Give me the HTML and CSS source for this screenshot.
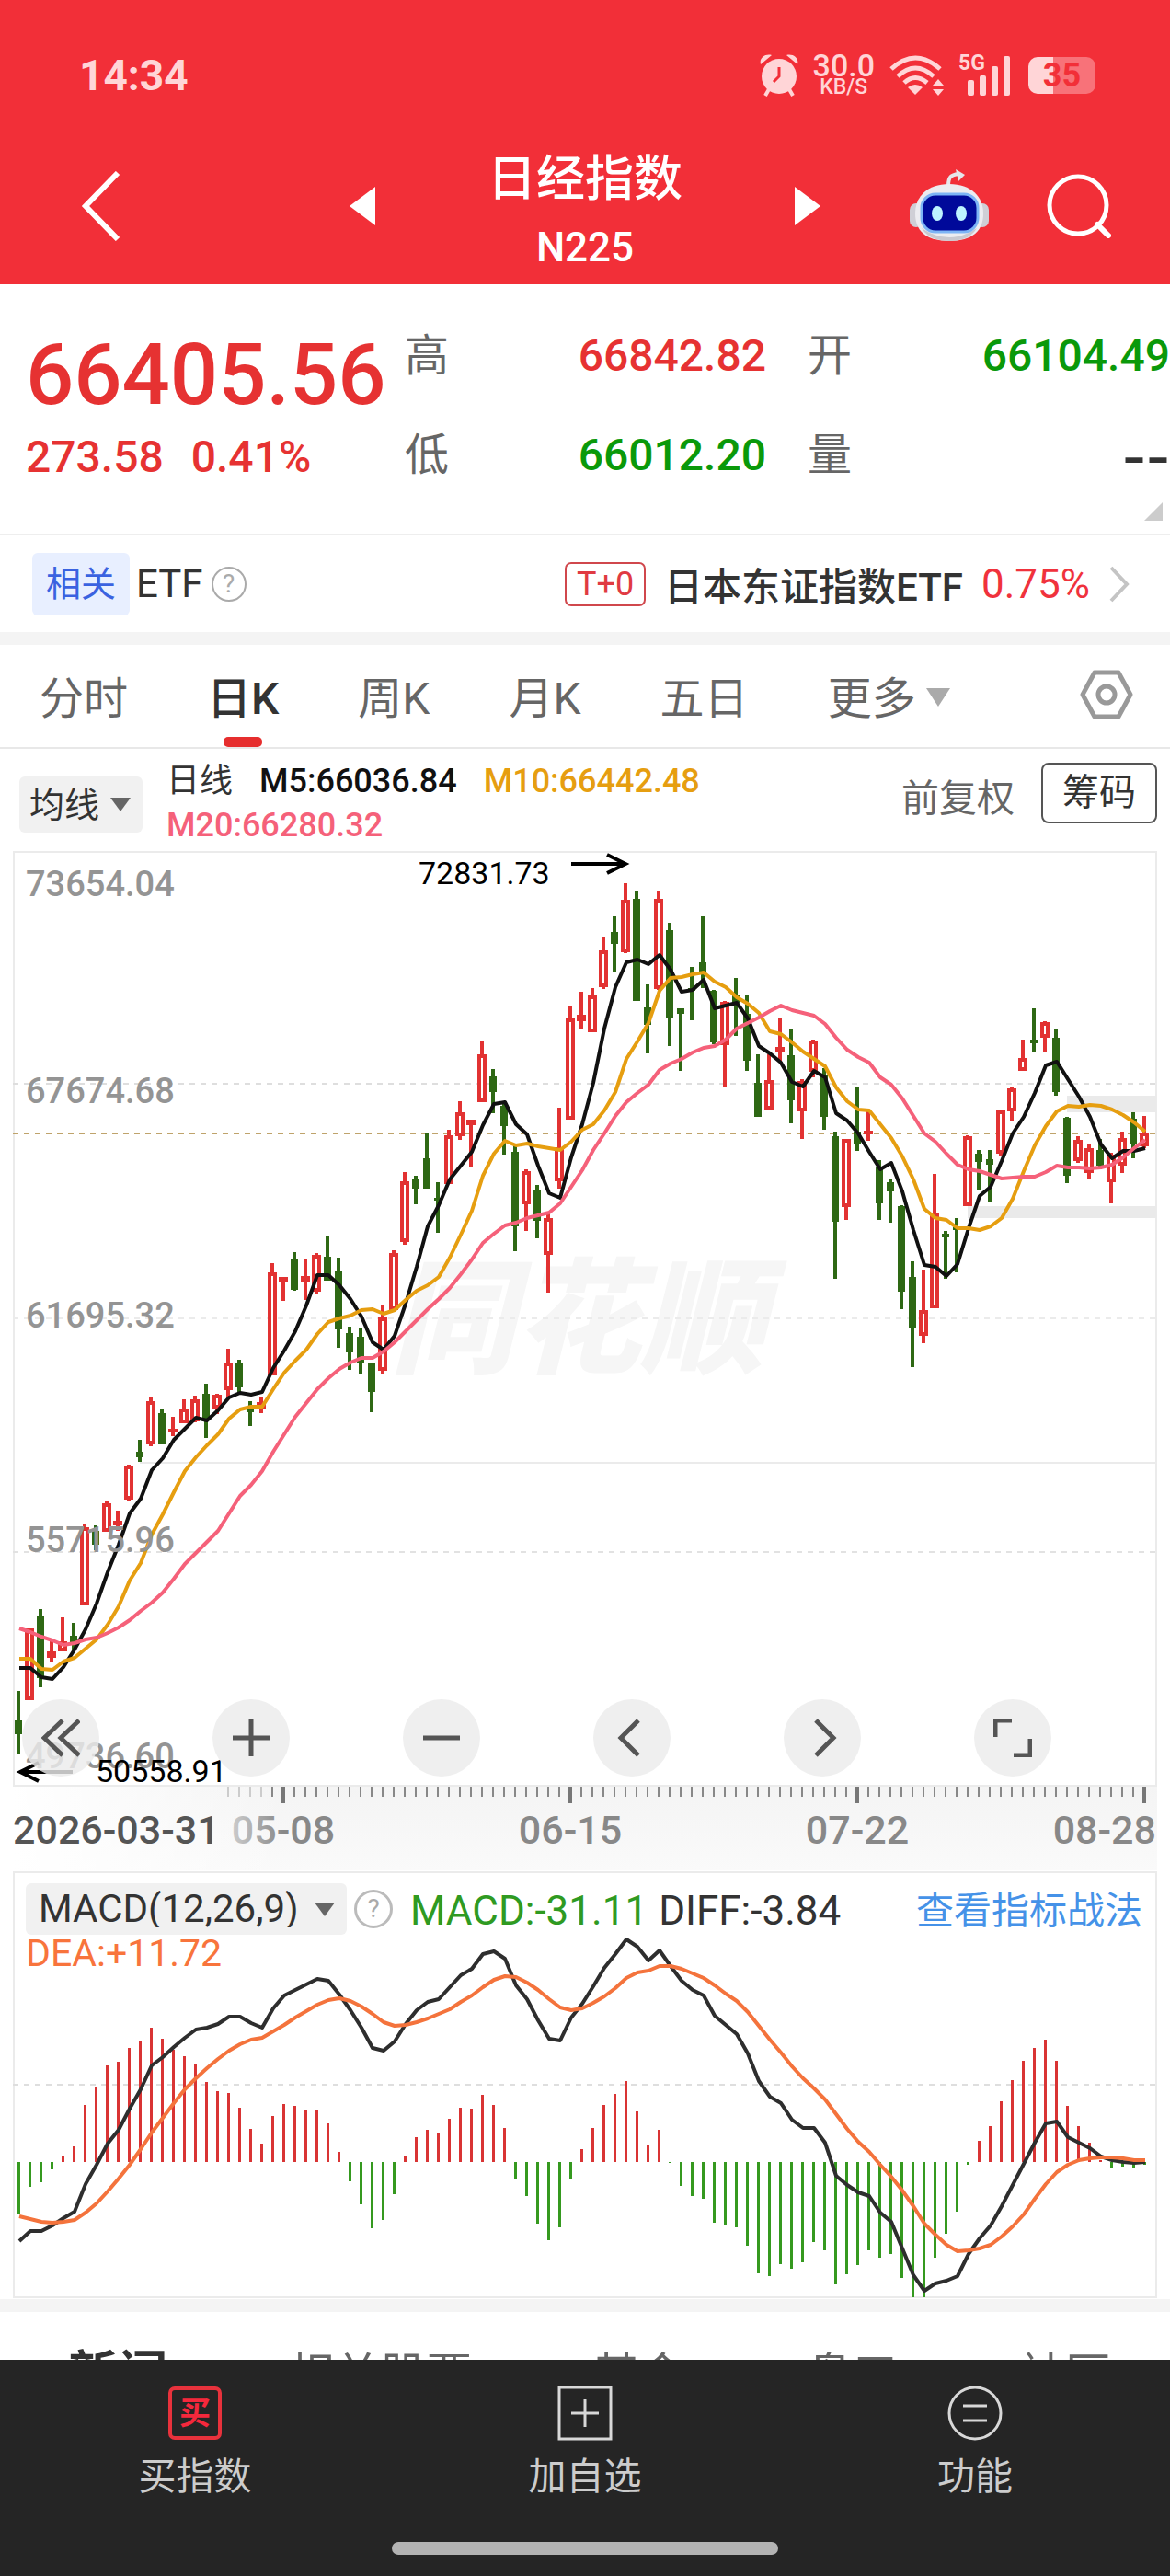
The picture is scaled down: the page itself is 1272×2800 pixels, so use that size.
FILE: index.html
```html
<!DOCTYPE html>
<html lang="zh-CN">
<head>
  <meta charset="UTF-8">
  <meta name="viewport" content="width=device-width, initial-scale=1.0">
  <title>日经指数 N225</title>
  <link rel="stylesheet" href="styles.css">
</head>
<body>

<header class="header">
  <div class="status-bar">
    <span class="clock">14:34</span>
    <div class="status-icons">
      <svg width="42" height="46" viewBox="0 0 42 46" fill="#ffd5d7">
        <path d="M1 11C-1 4 6-1 13 1ZM41 11C43 4 36-1 29 1Z"/>
        <path d="M10 38L6 45M32 38L36 45" stroke="#ffd5d7" stroke-width="4"/>
        <circle cx="21" cy="24" r="19"/>
        <path d="M21 14V24L15 30" fill="none" stroke="#f22f38" stroke-width="3"/>
      </svg>
      <div class="speed"><span>30.0</span><small>KB/S</small></div>
      <svg width="59" height="46" viewBox="0 0 59 46" fill="#ffd5d7">
        <g fill="none" stroke="#ffd5d7" stroke-width="5">
          <path d="M2 16Q28-8 55 16"/>
          <path d="M9 24Q28 6 48 24"/>
          <path d="M16 31Q28 20 41 31"/>
        </g>
        <path d="M28 44L20 36Q28 30 36 36ZM53 27L59 34H47ZM53 45L59 38H47Z"/>
      </svg>
      <div class="signal">
        <span>5G</span>
        <svg width="46" height="44" viewBox="0 0 46 44" fill="#ffd5d7">
          <rect x="0" y="27" width="7" height="17" rx="2"/>
          <rect x="13" y="22" width="7" height="22" rx="2"/>
          <rect x="26" y="12" width="7" height="32" rx="2"/>
          <rect x="39" y="1" width="7" height="43" rx="2"/>
        </svg>
      </div>
      <div class="battery"><span>35</span></div>
    </div>
  </div>

  <div class="title-bar">
    <button class="icon-btn back" aria-label="返回">
      <svg width="44" height="76" viewBox="0 0 44 76"><path d="M40 2L5 38L40 74" fill="none" stroke="#fff" stroke-width="6"/></svg>
    </button>
    <div class="title-switch">
      <button class="icon-btn" aria-label="上一个"><svg width="28" height="42" viewBox="0 0 28 42"><path d="M28 0V42L0 21Z" fill="#fff"/></svg></button>
      <h1 class="title"><span>日经指数</span><small>N225</small></h1>
      <button class="icon-btn" aria-label="下一个"><svg width="28" height="42" viewBox="0 0 28 42"><path d="M0 0V42L28 21Z" fill="#fff"/></svg></button>
    </div>
    <div class="title-actions">
      <button class="icon-btn" aria-label="助手">
        <svg width="88" height="80" viewBox="0 0 88 80">
          <path d="M43 18C43 8 46 6 54 5" fill="none" stroke="#e6e6ea" stroke-width="4"/>
          <path d="M51 0L61 6L54 13Z" fill="#e6e6ea"/>
          <rect x="1" y="37" width="14" height="26" rx="7" fill="#cfcfd6"/>
          <rect x="73" y="37" width="14" height="26" rx="7" fill="#cfcfd6"/>
          <path d="M44 16C68 16 81 30 81 48C81 68 68 78 44 78C20 78 7 68 7 48C7 30 20 16 44 16Z" fill="#ececf0"/>
          <path d="M14 64Q44 84 74 64Q66 78 44 78Q22 78 14 64Z" fill="#c9c9d0"/>
          <rect x="14" y="27" width="61" height="41" rx="15" fill="#00099a" stroke="#7db4f5" stroke-width="3"/>
          <ellipse cx="31" cy="48" rx="6" ry="8" fill="#bdf3ff"/>
          <ellipse cx="57" cy="48" rx="6" ry="8" fill="#bdf3ff"/>
        </svg>
      </button>
      <button class="icon-btn" aria-label="搜索">
        <svg width="70" height="70" viewBox="0 0 70 70" fill="none" stroke="#fff" stroke-width="5"><circle cx="34" cy="34" r="31"/><path d="M55 55L67 67" stroke-width="6" stroke-linecap="round"/></svg>
      </button>
    </div>
  </div>
</header>

<main>
  <section class="quote">
    <div class="quote-price">
      <strong>66405.56</strong>
      <div class="quote-change"><span>273.58</span><span>0.41%</span></div>
    </div>
    <dl class="quote-list">
      <dt>高</dt><dd class="up">66842.82</dd>
      <dt>开</dt><dd class="down">66104.49</dd>
      <dt>低</dt><dd class="down">66012.20</dd>
      <dt>量</dt><dd class="empty">--</dd>
    </dl>
    <i class="quote-more"></i>
  </section>

  <section class="etf">
    <span class="tag">相关</span>
    <span class="etf-label">ETF</span>
    <button class="help" aria-label="ETF说明">?</button>
    <a class="etf-link" href="#">
      <span class="t0">T+0</span>
      <b>日本东证指数ETF</b>
      <span class="etf-rate">0.75%</span>
      <svg width="24" height="40" viewBox="0 0 24 40"><path d="M3 2L20 20L3 38" fill="none" stroke="#c4c4c4" stroke-width="4"/></svg>
    </a>
  </section>

  <nav class="periods">
    <button>分时</button>
    <button class="active">日K</button>
    <button>周K</button>
    <button>月K</button>
    <button>五日</button>
    <button class="more">更多<i class="caret"></i></button>
    <button class="setting" aria-label="设置">
      <svg width="58" height="54" viewBox="0 0 58 54" fill="none" stroke="#999" stroke-width="5" stroke-linejoin="round"><path d="M16 3H42L55 27L42 51H16L3 27Z"/><circle cx="29" cy="27" r="9"/></svg>
    </button>
  </nav>

  <section class="indicator">
    <label class="drop drop-ma">
      <select aria-label="主图指标"><option>均线</option></select>
      <i class="caret"></i>
    </label>
    <div class="ma-values">
      <span class="ma-name">日线</span>
      <span class="m5">M5:66036.84</span>
      <span class="m10">M10:66442.48</span>
      <span class="m20">M20:66280.32</span>
    </div>
    <button class="adjust">前复权</button>
    <button class="chips">筹码</button>
  </section>

  <section class="kline">
    <svg id="kline" viewBox="0 925 1272 1108"></svg>
    <div class="controls">
      <button aria-label="最左"><svg width="42" height="42" viewBox="0 0 42 42"><path d="M23 2L3 21L23 40M41 2L21 21L41 40"/></svg></button>
      <button aria-label="放大"><svg width="42" height="42" viewBox="0 0 42 42"><path d="M21 1V41M1 21H41"/></svg></button>
      <button aria-label="缩小"><svg width="42" height="42" viewBox="0 0 42 42"><path d="M1 21H41"/></svg></button>
      <button aria-label="左移"><svg width="42" height="42" viewBox="0 0 42 42"><path d="M28 2L9 21L28 40"/></svg></button>
      <button aria-label="右移"><svg width="42" height="42" viewBox="0 0 42 42"><path d="M14 2L33 21L14 40"/></svg></button>
      <button aria-label="全屏"><svg width="42" height="42" viewBox="0 0 42 42"><path d="M2 20V2H20M22 40H40V22"/></svg></button>
    </div>
  </section>

  <section class="macd">
    <svg id="macd" viewBox="0 2033 1272 466"></svg>
    <div class="macd-head">
      <label class="drop drop-macd">
        <select aria-label="副图指标"><option>MACD(12,26,9)</option></select>
        <i class="caret"></i>
      </label>
      <button class="help" aria-label="MACD说明">?</button>
      <span class="macd-value">MACD:-31.11</span>
      <span class="diff-value">DIFF:-3.84</span>
      <a href="#">查看指标战法</a>
      <span class="dea-value">DEA:+11.72</span>
    </div>
  </section>

  <nav class="news-tabs">
    <a class="active" href="#">新闻</a>
    <a href="#">相关股票</a>
    <a href="#">基金</a>
    <a href="#">盘口</a>
    <a href="#">社区</a>
  </nav>
</main>

<footer class="bottom-bar">
  <div class="bottom-items">
    <button><span class="buy-icon">买</span>买指数</button>
    <button>
      <svg width="60" height="60" viewBox="0 0 60 60" fill="none" stroke="#d8d8d8" stroke-width="3"><rect x="2" y="2" width="56" height="56"/><path d="M30 15V45M15 30H45"/></svg>
      加自选
    </button>
    <button>
      <svg width="60" height="60" viewBox="0 0 60 60" fill="none" stroke="#d8d8d8" stroke-width="3"><circle cx="30" cy="30" r="28"/><path d="M17 22H43M17 38H43"/></svg>
      功能
    </button>
  </div>
  <div class="home-indicator"></div>
</footer>

<script src="chart.js"></script>
</body>
</html>
```

FILE: styles.css
```css
* {
  box-sizing: border-box;
}

body {
  margin: 0;
  min-height: 100vh;
  background-color: #fff;
  color: #333;
  font-family: Roboto, "Noto Sans CJK SC", sans-serif;
}

button, select {
  padding: 0;
  border: none;
  background: none;
  color: inherit;
  font: inherit;
}

a {
  color: inherit;
  text-decoration: none;
}

svg {
  display: block;
}

.up { color: #e63232; }
.down { color: #0a990a; }

/* Header */
.header {
  height: 309px;
  padding-top: 52px;
  background-color: #f22f38;
  color: #fff;
}

.status-bar {
  display: flex;
  justify-content: space-between;
  align-items: center;
  height: 60px;
  padding: 0 77px 0 86px;
  color: #ffd5d7;
}

.clock {
  font-size: 46px;
  font-weight: 700;
}

.status-icons {
  display: flex;
  align-items: center;
  gap: 16px;
}

.speed {
  display: flex;
  flex-direction: column;
  align-items: center;
  font-size: 34px;
  font-weight: 500;
  line-height: 26px;
}

.speed small {
  font-size: 23px;
  line-height: 22px;
}

.signal {
  position: relative;
  padding-left: 10px;
}

.signal span {
  position: absolute;
  left: 0;
  top: 0;
  font-size: 23px;
  font-weight: 700;
  line-height: 18px;
}

.battery {
  width: 73px;
  height: 40px;
  margin: 0 4px;
  border-radius: 10px;
  background: linear-gradient(90deg, #ffd5d7 37%, #f87279 37%);
  color: #f22f38;
  font-size: 36px;
  font-weight: 700;
  line-height: 41px;
  text-align: center;
}

.title-bar {
  display: grid;
  grid-template-columns: 1fr 512px 1fr;
  align-items: center;
  height: 197px;
  padding: 26px 64px 0;
}

.back {
  justify-self: start;
  margin-left: 24px;
}

.title-switch {
  display: flex;
  justify-content: space-between;
  align-items: center;
}

.title {
  display: flex;
  flex-direction: column;
  margin: 0;
  padding-top: 16px;
  font-size: 53px;
  font-weight: 500;
  line-height: 74px;
  text-align: center;
}

.title small {
  font-size: 44px;
}

.title-actions {
  display: flex;
  justify-content: flex-end;
  align-items: center;
  gap: 62px;
}

/* Quote */
.quote {
  position: relative;
  display: flex;
  height: 273px;
  padding: 24px 0 0 28px;
  border-bottom: 2px solid #eee;
}

.quote-price {
  width: 412px;
  color: #e63232;
}

.quote-price strong {
  display: block;
  font-size: 92px;
  font-weight: 500;
  line-height: 150px;
}

.quote-change {
  display: flex;
  gap: 30px;
  font-size: 48px;
  font-weight: 500;
  line-height: 28px;
}

.quote-list {
  flex: 1;
  display: grid;
  grid-template-columns: 48px 345px 93px 1fr;
  grid-auto-rows: 108px;
  margin: 0;
  font-size: 48px;
  line-height: 108px;
}

.quote-list dt {
  color: #666;
}

.quote-list dt:nth-of-type(even) {
  padding-left: 45px;
}

.quote-list dd {
  margin: 0;
  font-weight: 500;
  text-align: right;
}

.quote-list .empty {
  font-family: "DejaVu Sans", sans-serif;
  font-size: 72px;
}

.quote-more {
  position: absolute;
  right: 8px;
  bottom: 14px;
  border-left: 20px solid transparent;
  border-bottom: 20px solid #ccc;
}

/* Related ETF */
.etf {
  display: flex;
  align-items: center;
  height: 119px;
  padding: 0 43px 0 35px;
  border-bottom: 14px solid #f4f4f4;
  font-size: 42px;
}

.tag {
  width: 106px;
  border-radius: 6px;
  background-color: #e8efff;
  color: #3a62e0;
  font-size: 38px;
  line-height: 68px;
  text-align: center;
}

.etf-label {
  padding: 0 9px 0 7px;
}

.help {
  width: 38px;
  height: 38px;
  border: 2px solid #aaa;
  border-radius: 50%;
  color: #aaa;
  font-size: 28px;
  line-height: 34px;
}

.etf-link {
  display: flex;
  align-items: center;
  gap: 20px;
  margin-left: auto;
}

.etf-link b {
  font-weight: 500;
}

.t0 {
  width: 88px;
  border: 2px solid #d0474c;
  border-radius: 7px;
  color: #e03a42;
  font-size: 36px;
  line-height: 44px;
  text-align: center;
}

.etf-rate {
  color: #f0323c;
  font-size: 44px;
}

/* Period tabs */
.periods {
  display: flex;
  align-items: stretch;
  gap: 86px;
  height: 113px;
  padding: 0 40px 0 43px;
  border-bottom: 2px solid #e8e8e8;
  color: #666;
  font-size: 48px;
}

.periods button {
  position: relative;
  padding-bottom: 4px;
}

.periods .active {
  color: #333;
  font-weight: 500;
}

.periods .active::after {
  content: "";
  position: absolute;
  left: 50%;
  bottom: 0;
  width: 42px;
  height: 11px;
  margin-left: -21px;
  border-radius: 5px;
  background-color: #e62e2e;
}

.caret {
  display: inline-block;
  border: 11px solid transparent;
  border-top: 15px solid #666;
  border-bottom: none;
}

.more .caret {
  margin-left: 11px;
  border-width: 20px 13px 0;
  border-top-color: #aaa;
  vertical-align: 8px;
}

.periods .setting {
  margin-left: auto;
}

/* Moving averages */
.indicator {
  display: flex;
  align-items: center;
  height: 111px;
  padding: 0 14px 0 21px;
}

.drop {
  position: relative;
  display: flex;
  align-items: center;
  border-radius: 6px;
  background-color: #f1f1f1;
}

.drop select {
  width: 100%;
  height: 100%;
  appearance: none;
}

.drop .caret {
  position: absolute;
  right: 13px;
  pointer-events: none;
}

.drop-ma {
  width: 134px;
  height: 61px;
  margin-top: 10px;
}

.drop-ma select {
  padding-left: 11px;
  font-size: 38px;
}

.ma-values {
  flex: 1;
  display: flex;
  flex-wrap: wrap;
  column-gap: 29px;
  max-width: 620px;
  padding: 6px 0 0 26px;
  font-size: 36px;
  font-weight: 500;
  line-height: 48px;
}

.ma-name {
  font-weight: 400;
}

.m5 { color: #111; }
.m10 { color: #e69e10; }
.m20 { color: #f5617a; }

.adjust {
  margin-bottom: 12px;
  margin-left: auto;
  color: #666;
  font-size: 41px;
}

.chips {
  width: 126px;
  height: 66px;
  margin: 0 0 16px 29px;
  border: 2px solid #555;
  border-radius: 8px;
  font-size: 40px;
  line-height: 60px;
}

/* Charts */
.kline, .macd {
  position: relative;
}

.kline > svg, .macd > svg {
  width: 100%;
  height: auto;
}

.controls {
  position: absolute;
  left: 24px;
  bottom: 102px;
  display: flex;
  gap: 123px;
}

.controls button {
  display: flex;
  justify-content: center;
  align-items: center;
  width: 84px;
  height: 84px;
  border-radius: 50%;
  background-color: rgba(235, 235, 235, 0.82);
}

.controls svg {
  fill: none;
  stroke: #555;
  stroke-width: 5;
}

.macd {
  border-bottom: 14px solid #f4f4f4;
}

.macd-head {
  position: absolute;
  top: 14px;
  left: 28px;
  right: 30px;
  display: flex;
  flex-wrap: wrap;
  align-items: center;
  font-size: 42px;
  line-height: 40px;
}

.drop-macd {
  width: 349px;
  height: 56px;
  margin-right: 8px;
}

.drop-macd select {
  padding-left: 14px;
}

.macd-head .help {
  width: 42px;
  height: 42px;
  border-width: 3px;
  border-color: #bbb;
}

.macd-value, .diff-value {
  padding-top: 4px;
  font-size: 44px;
}

.macd-value {
  padding-right: 12px;
  padding-left: 19px;
  color: #2f9a22;
}

.macd-head a {
  margin-left: auto;
  padding-top: 4px;
  color: #4592e8;
  font-size: 41px;
}

.dea-value {
  width: 100%;
  color: #f8743c;
  font-size: 41px;
}

/* News tabs */
.news-tabs {
  display: flex;
  height: 120px;
  padding: 0 64px 0 74px;
  justify-content: space-between;
  color: #666;
  font-size: 50px;
  line-height: 138px;
}

.news-tabs .active {
  color: #333;
  font-size: 54px;
  font-weight: 700;
}

/* Bottom bar */
.bottom-bar {
  position: fixed;
  left: 0;
  right: 0;
  bottom: 0;
  height: 235px;
  padding-top: 28px;
  background-color: #252525;
}

.bottom-items {
  display: flex;
}

.bottom-items button {
  flex: 1;
  display: flex;
  flex-direction: column;
  align-items: center;
  gap: 9px;
  color: #ccc;
  font-size: 41px;
  line-height: 60px;
}

.buy-icon {
  width: 58px;
  height: 58px;
  margin: 1px;
  border: 4px solid #e8323c;
  border-radius: 7px;
  color: #f5283c;
  font-size: 34px;
  font-weight: 700;
  line-height: 50px;
}

.home-indicator {
  width: 33%;
  height: 14px;
  margin: 41px auto 0;
  border-radius: 7px;
  background-color: #b3b3b3;
}
```

FILE: chart.js
```js
const STEP = 12;
const START = 20;
const x = i => START + i * STEP;

// [up, high, body top, body bottom, low]
const candles = [
  [0,1838,1870,1885,1906],[1,1770,1770,1848,1848],[0,1749,1757,1824,1834],[1,1783,1795,1802,1806],
  [1,1758,1784,1795,1795],[0,1764,1778,1785,1795],[1,1657,1660,1745,1745],[0,1658,1664,1679,1685],
  [1,1632,1634,1665,1665],[1,1642,1653,1658,1664],[1,1592,1593,1630,1631],[0,1565,1578,1584,1589],
  [1,1518,1523,1570,1572],[0,1531,1536,1570,1570],[1,1540,1553,1557,1561],[1,1521,1531,1547,1547],
  [1,1517,1521,1545,1546],[0,1504,1515,1542,1563],[1,1515,1516,1531,1537],[1,1466,1481,1511,1518],
  [0,1478,1482,1508,1514],[0,1523,1528,1535,1550],[1,1518,1524,1532,1536],[1,1373,1383,1495,1495],
  [1,1388,1388,1393,1414],[0,1361,1368,1402,1403],[1,1368,1387,1394,1413],[1,1362,1364,1404,1406],
  [0,1343,1366,1392,1392],[0,1367,1382,1445,1465],[0,1442,1449,1470,1489],[0,1443,1453,1481,1494],
  [0,1481,1481,1513,1535],[1,1418,1432,1490,1493],[1,1359,1362,1424,1424],[1,1274,1284,1350,1353],
  [0,1278,1281,1292,1309],[0,1231,1259,1292,1292],[0,1285,1302,1305,1340],[1,1228,1234,1287,1287],
  [1,1197,1209,1235,1239],[1,1217,1217,1223,1268],[1,1131,1146,1198,1198],[0,1162,1170,1187,1210],
  [0,1200,1202,1224,1255],[0,1244,1252,1333,1360],[1,1271,1273,1309,1338],[0,1288,1294,1327,1346],
  [1,1318,1324,1364,1405],[1,1204,1247,1284,1292],[1,1093,1107,1217,1217],[1,1078,1103,1110,1118],
  [1,1074,1082,1122,1122],[1,1019,1033,1073,1075],[0,996,1013,1026,1057],[1,960,978,1035,1036],
  [0,968,977,1088,1088],[0,1070,1095,1114,1145],[1,969,977,1075,1076],[0,1003,1011,1106,1137],
  [0,1096,1096,1102,1164],[0,1051,1074,1077,1109],[0,996,1046,1058,1074],[0,1076,1077,1133,1135],
  [1,1088,1089,1136,1181],[0,1063,1081,1090,1126],[0,1081,1102,1153,1164],[0,1146,1177,1214,1214],
  [1,1146,1174,1206,1206],[1,1106,1138,1143,1155],[0,1118,1147,1196,1221],[1,1173,1175,1208,1238],
  [1,1130,1131,1165,1171],[0,1161,1168,1214,1228],[0,1230,1235,1328,1390],[1,1238,1238,1312,1326],
  [0,1182,1230,1244,1251],[1,1206,1229,1233,1240],[0,1261,1268,1308,1326],[0,1282,1285,1295,1329],
  [0,1310,1311,1404,1423],[0,1371,1388,1444,1486],[1,1380,1424,1452,1460],[1,1276,1318,1422,1422],
  [0,1338,1341,1345,1390],[0,1324,1334,1337,1383],[1,1234,1235,1311,1311],[0,1250,1254,1263,1294],
  [0,1250,1260,1266,1307],[1,1206,1207,1254,1256],[1,1182,1183,1208,1218],[1,1130,1150,1164,1164],
  [0,1096,1130,1134,1144],[1,1110,1111,1128,1143],[0,1118,1128,1187,1191],[0,1214,1215,1278,1286],
  [1,1235,1239,1262,1264],[1,1244,1248,1275,1281],[0,1238,1250,1267,1271],[1,1253,1255,1285,1308],
  [1,1230,1237,1267,1275],[0,1209,1216,1244,1259],[1,1213,1231,1246,1248]
];

const m5 = [1813,1813,1823,1825,1812,1793,1771,1743,1709,1679,1645,1629,1598,1585,1565,1553,1541,1544,1533,1519,1514,1516,1513,
  1487,1468,1447,1419,1386,1386,1397,1412,1431,1459,1467,1452,1417,1377,1333,1310,1282,1267,1252,1223,1200,1198,1222,1233,1267,
  1297,1302,1258,1222,1177,1118,1073,1046,1043,1048,1038,1054,1078,1076,1065,1096,1093,1090,1107,1137,1145,1155,1176,1181,1164,
  1171,1210,1218,1232,1252,1271,1264,1295,1337,1375,1377,1387,1374,1335,1300,1290,1262,1232,1214,1188,1158,1154,1173,1192,1214,
  1244,1259,1251,1251,1248];

const m10 = [1803,1803,1814,1815,1806,1802,1792,1782,1766,1746,1718,1699,1668,1646,1622,1599,1584,1571,1559,1542,1532,1529,1529,
  1510,1492,1479,1467,1450,1437,1433,1430,1424,1423,1428,1424,1413,1403,1397,1388,1367,1342,1316,1278,1254,1240,1245,1243,1246,
  1248,1250,1241,1228,1222,1207,1187,1151,1132,1112,1077,1063,1062,1059,1057,1067,1073,1084,1091,1101,1121,1124,1133,1143,1151,
  1159,1182,1197,1206,1207,1222,1237,1257,1282,1314,1324,1326,1335,1335,1337,1333,1324,1303,1273,1245,1224,1208,1202,1203,1201,
  1202,1206,1212,1220,1230];

const m20 = [1770,1774,1779,1783,1788,1786,1782,1780,1775,1769,1761,1751,1742,1731,1716,1700,1688,1676,1664,1645,1626,1614,1599,
  1578,1559,1540,1525,1510,1498,1488,1481,1476,1476,1469,1459,1447,1435,1423,1412,1400,1385,1369,1351,1341,1332,1329,1324,1321,
  1318,1308,1290,1272,1250,1232,1213,1198,1188,1179,1163,1156,1151,1144,1139,1137,1130,1118,1112,1106,1099,1093,1098,1101,1104,
  1113,1128,1141,1149,1155,1171,1179,1194,1213,1232,1241,1254,1266,1271,1273,1277,1281,1280,1279,1279,1274,1267,1269,1269,1270,
  1269,1266,1258,1248,1239];

const ZERO = 2350;
const bars = [2407,2377,2372,2358,2343,2333,2288,2268,2245,2241,2226,2219,2204,2216,2228,2235,2244,2263,2273,2275,2291,2314,2330,
  2300,2287,2289,2293,2294,2308,2339,2371,2396,2422,2413,2385,2344,2323,2315,2318,2303,2291,2292,2277,2288,2313,2368,2387,2417,
  2435,2421,2368,2336,2313,2288,2276,2262,2295,2331,2315,2351,2376,2387,2390,2416,2419,2421,2441,2471,2474,2461,2466,2459,2437,
  2446,2483,2472,2462,2446,2454,2450,2476,2497,2497,2454,2428,2404,2353,2327,2311,2284,2261,2240,2226,2217,2240,2289,2311,2329,
  2348,2356,2355,2357,2353];

const diff = [2436,2425,2425,2419,2411,2404,2374,2353,2330,2315,2292,2271,2245,2236,2225,2215,2206,2204,2200,2192,2192,2199,2204,
  2183,2169,2163,2157,2151,2153,2168,2185,2204,2226,2229,2219,2200,2185,2176,2173,2160,2147,2140,2124,2121,2129,2158,2173,2196,
  2216,2218,2193,2178,2159,2139,2124,2108,2116,2131,2120,2137,2153,2163,2169,2191,2201,2211,2232,2262,2279,2286,2304,2313,2313,
  2329,2365,2375,2383,2387,2405,2415,2444,2473,2490,2482,2479,2474,2450,2433,2419,2398,2375,2352,2329,2308,2306,2323,2329,2335,
  2344,2348,2350,2351,2350];

const dea = [2409,2412,2415,2416,2415,2413,2405,2395,2382,2368,2353,2336,2318,2302,2286,2271,2259,2248,2238,2229,2222,2217,2215,
  2208,2201,2193,2186,2179,2174,2172,2175,2181,2189,2198,2202,2201,2198,2194,2189,2184,2176,2169,2160,2152,2148,2149,2155,2163,
  2173,2182,2185,2183,2177,2170,2161,2150,2144,2142,2137,2137,2140,2145,2150,2158,2167,2175,2187,2202,2217,2231,2246,2259,2270,
  2282,2298,2314,2328,2339,2353,2366,2381,2398,2417,2429,2440,2447,2446,2444,2440,2431,2420,2407,2390,2374,2361,2353,2348,2346,
  2345,2345,2346,2348,2348];

const rect = (x, y, w, h, fill) => `<rect x="${x}" y="${y}" width="${w}" height="${h}" fill="${fill}"/>`;
const text = (x, y, size, fill, str, more = '') =>
  `<text x="${x}" y="${y}" font-size="${size}" fill="${fill}" ${more}>${str}</text>`;
const hline = (y, color, dash = '', from = 14) =>
  `<path d="M${from} ${y}H1257" stroke="${color}" stroke-width="2" stroke-dasharray="${dash}"/>`;
const curve = (data, color) =>
  `<polyline points="${data.map((y, i) => x(i) + 1 + ',' + y).join(' ')}" fill="none" stroke="${color}" stroke-width="4" stroke-linejoin="round"/>`;

function drawCandle([up, high, top, bottom, low], i) {
  const cx = x(i);
  const color = up ? '#e23232' : '#2e6814';
  let out = rect(cx - 2, high, 4, Math.max(top - high, 0), color) + rect(cx - 2, bottom, 4, Math.max(low - bottom, 0), color);
  if (up && bottom - top > 8) {
    out += `<rect x="${cx - 3}" y="${top + 2}" width="6" height="${bottom - top - 4}" fill="#fff" stroke="${color}" stroke-width="4"/>`;
  } else {
    const w = up ? 10 : 8;
    out += rect(cx - w / 2, top, w, Math.max(bottom - top, 2), color);
  }
  return out;
}

function drawKline() {
  let out = `<defs>
    <linearGradient id="axisBg" x2="0" y2="1"><stop offset="0" stop-color="#f4f4f4"/><stop offset="1" stop-color="#fafafa"/></linearGradient>
    <linearGradient id="fade"><stop offset="0" stop-color="#fff"/><stop offset="1" stop-color="#fff" stop-opacity="0"/></linearGradient>
    <linearGradient id="dateFade"><stop offset="0" stop-color="#ccc"/><stop offset="0.5" stop-color="#888"/></linearGradient>
  </defs>`;
  out += rect(14, 1942, 1244, 91, 'url(#axisBg)') + rect(14, 1942, 300, 91, 'url(#fade)');
  out += text(424, 1482, 136, '#f6f6f6', '同花顺', 'font-weight="900" font-style="italic"');
  out += `<rect x="15" y="926" width="1242" height="1015" fill="none" stroke="#ebebeb" stroke-width="2"/>`;
  out += hline(1178, '#dedede', '6 6') + hline(1433, '#ebebeb', '6 6') + hline(1687, '#e2e2e2', '6 6');
  out += hline(1590, '#ebebeb', '', 152);
  out += rect(1160, 1191, 97, 18, '#eaeaea') + rect(1052, 1311, 205, 13, '#eaeaea');
  out += hline(1232, '#bfa36b', '6 6');
  out += candles.map(drawCandle).join('');
  out += curve(m5, '#111') + curve(m10, '#e69e10') + curve(m20, '#f5617a');

  // price scale
  [['73654.04', 974], ['67674.68', 1199], ['61695.32', 1443], ['55715.96', 1687], ['49736.60', 1922]].forEach(([label, y]) => {
    out += text(28, y, 38, '#949494', label, 'font-weight="500"');
  });

  // highest and lowest price
  out += text(455, 961, 34, '#000', '72831.73') + text(104, 1937, 34, '#000', '50558.91');
  out += '<path d="M621 939H680M660 929L680 939L660 949M79 1926H22M42 1916L22 1926L42 1936" fill="none" stroke="#000" stroke-width="4"/>';

  // date scale
  for (let i = 19; i <= 102; i++) {
    const major = [24, 50, 76, 102].includes(i);
    const color = i < 23 ? '#ccc' : '#888';
    out += major ? rect(x(i) - 2, 1942, 4, 18, '#777') : rect(x(i) - 1, 1942, 2, 11, color);
  }
  out += text(14, 2004, 43, '#555', '2026-03-31', 'font-weight="500"');
  [['05-08', 308], ['06-15', 620], ['07-22', 932]].forEach(([label, cx]) => {
    out += text(cx, 2004, 43, cx === 308 ? 'url(#dateFade)' : '#888', label, 'font-weight="500" text-anchor="middle"');
  });
  out += text(1257, 2004, 43, '#888', '08-28', 'font-weight="500" text-anchor="end"');
  document.getElementById('kline').innerHTML = out;
}

function drawMacd() {
  let out = '<rect x="15" y="2035" width="1242" height="462" fill="#fff" stroke="#ebebeb" stroke-width="2"/>';
  out += hline(2266, '#dedede', '6 6');
  bars.forEach((y, i) => {
    out += rect(x(i) - 1, Math.min(y, ZERO), 3, Math.abs(y - ZERO), y < ZERO ? '#d93434' : '#35991f');
  });
  out += curve(diff, '#2e2e2e') + curve(dea, '#f4733c');
  document.getElementById('macd').innerHTML = out;
}

drawKline();
drawMacd();
```
